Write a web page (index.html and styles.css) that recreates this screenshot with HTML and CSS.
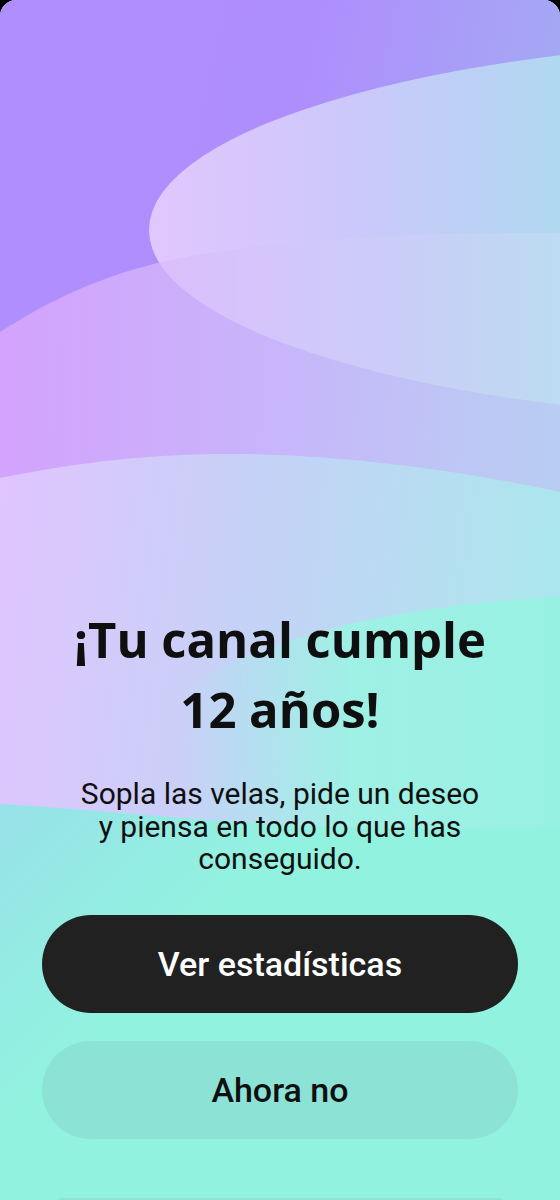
FILE: index.html
```html
<!DOCTYPE html>
<html lang="es">
  <head>
    <meta charset="UTF-8" />
    <meta name="viewport" content="width=device-width, initial-scale=1.0" />
    <title>Aniversario del canal</title>
    <link rel="stylesheet" href="styles.css">
  </head>
  <body>
    <div class="card">
      <svg class="backdrop" viewBox="0 0 560 1200" preserveAspectRatio="none" aria-hidden="true">
        <defs>
          <linearGradient id="base" x1="0" y1="0" x2="560" y2="120" gradientUnits="userSpaceOnUse">
            <stop offset="0" stop-color="#b18efd" />
            <stop offset="0.55" stop-color="#ae8efc" />
            <stop offset="1" stop-color="#a4a9f4" />
          </linearGradient>
          <linearGradient id="oval" x1="150" y1="0" x2="560" y2="0" gradientUnits="userSpaceOnUse">
            <stop offset="0" stop-color="#e1c7fd" />
            <stop offset="0.5" stop-color="#cbc8fa" />
            <stop offset="1" stop-color="#b0d8f1" />
          </linearGradient>
          <linearGradient id="band" x1="0" y1="0" x2="560" y2="0" gradientUnits="userSpaceOnUse">
            <stop offset="0" stop-color="#e2acfd" />
            <stop offset="0.5" stop-color="#d3c5fa" />
            <stop offset="1" stop-color="#c2dcf2" />
          </linearGradient>
          <linearGradient id="lower" x1="0" y1="500" x2="560" y2="570" gradientUnits="userSpaceOnUse">
            <stop offset="0" stop-color="#e0c5fe" />
            <stop offset="0.5" stop-color="#c3d3f6" />
            <stop offset="1" stop-color="#abe7ec" />
          </linearGradient>
          <linearGradient id="shore" x1="180" y1="0" x2="560" y2="0" gradientUnits="userSpaceOnUse">
            <stop offset="0" stop-color="#a4eaea" stop-opacity="0" />
            <stop offset="0.45" stop-color="#9ff0e5" />
            <stop offset="1" stop-color="#97f1e2" />
          </linearGradient>
          <linearGradient id="sea" x1="0" y1="800" x2="160" y2="960" gradientUnits="userSpaceOnUse">
            <stop offset="0" stop-color="#97e1e8" />
            <stop offset="1" stop-color="#92f2e0" />
          </linearGradient>
        </defs>
        <rect width="560" height="1200" fill="url(#base)" />
        <ellipse cx="849" cy="230" rx="700" ry="192" fill="url(#oval)" />
        <path d="M0 332 C50 300 100 276 170 260 C260 242 380 232 560 233 L560 1200 L0 1200 Z" fill="url(#band)" opacity="0.7" />
        <path d="M0 478 C80 462 150 454 230 454 C330 454 450 468 560 492 L560 1200 L0 1200 Z" fill="url(#lower)" />
        <path d="M180 690 C270 636 390 606 560 597 L560 1200 L180 1200 Z" fill="url(#shore)" />
        <path d="M0 804 C70 808 150 816 240 822 C360 830 460 830 560 826 L560 1200 L0 1200 Z" fill="url(#sea)" />
      </svg>

      <div class="content">
        <h1 class="title">¡Tu canal cumple<br>12 años!</h1>
        <p class="lead">Sopla las velas, pide un deseo y piensa en todo lo que has conseguido.</p>
        <div class="actions">
          <button type="button" class="btn btn-primary">Ver estadísticas</button>
          <button type="button" class="btn btn-secondary">Ahora no</button>
        </div>
        <div class="peek"></div>
      </div>
    </div>
  </body>
</html>
```

FILE: styles.css
```css
body {
  margin: 0;
  background-color: #000000;
  font-family: Roboto, "Noto Sans", sans-serif;
  color: #0f0f0f;
}

.card {
  position: relative;
  height: 1200px;
  border-radius: 16px 16px 0 0;
  overflow: hidden;
  background: #92f2e0;
}

.backdrop {
  position: absolute;
  top: 0;
  left: 0;
  width: 100%;
  height: 100%;
}

.content {
  position: relative;
  display: flex;
  flex-direction: column;
  align-items: center;
  padding: 604px 42px 0;
}

.title {
  margin: 0;
  font-family: "Open Sans", "Noto Sans", sans-serif;
  font-weight: 700;
  font-size: 49px;
  line-height: 70px;
  text-align: center;
}

.lead {
  margin: 34px 0 0;
  max-width: 412px;
  font-size: 30px;
  line-height: 32.5px;
  text-align: center;
}

.actions {
  display: flex;
  flex-direction: column;
  gap: 28px;
  width: 100%;
  margin-top: 39px;
}

.btn {
  width: 100%;
  height: 98px;
  border: none;
  border-radius: 49px;
  font-family: Roboto, sans-serif;
  font-weight: 500;
  font-size: 34px;
  cursor: pointer;
}

.btn-primary {
  background-color: #212121;
  color: #ffffff;
}

.btn-secondary {
  background-color: #8ce2d5;
  color: #0f0f0f;
}

.peek {
  width: 455px;
  height: 12px;
  margin-top: 59px;
  border-radius: 10px 10px 0 0;
  background-color: #8de4d6;
}
```
